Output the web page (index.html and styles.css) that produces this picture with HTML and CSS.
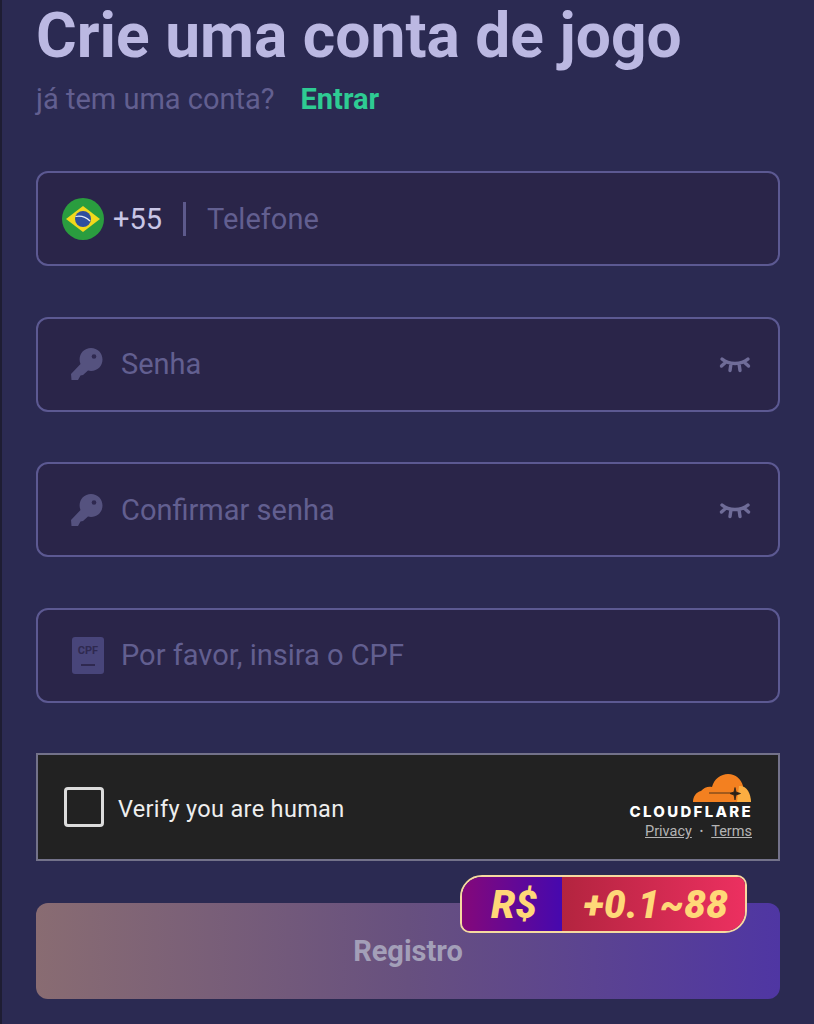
FILE: index.html
```html
<!DOCTYPE html>
<html lang="pt">
<head>
<meta charset="utf-8">
<title>Crie uma conta de jogo</title>
<link rel="stylesheet" href="styles.css">
</head>
<body>
<main class="page">
  <h1 class="title">Crie uma conta de jogo</h1>
  <p class="subtitle"><span>já tem uma conta?</span><a class="login">Entrar</a></p>
  <form class="form">
    <div class="field field-phone">
      <svg class="flag" viewBox="0 0 42 42"><circle cx="21" cy="21" r="21" fill="#2a9d3f"/><path d="M21 8 38 21 21 34 4 21Z" fill="#f2d91c"/><circle cx="21" cy="21" r="8" fill="#2f4f9e"/><path d="M13.500 18.500c5-1 10.500 .5 14.500 4.500" fill="none" stroke="#e8edf5" stroke-width="1.200"/></svg>
      <span class="code">+55</span>
      <span class="divider"></span>
      <span class="placeholder">Telefone</span>
    </div>
    <div class="field">
      <svg class="icon" viewBox="0 0 34 34"><path d="M21 1c6.500 0 11.500 5 11.500 11.500S27.500 24 21 24c-1 0-2-.2-3-.5L13 28l-2.500 .5L8 33H1.500L1 27 10.500 17c-.6-1.500-.9-3-.9-4.500C9.600 6 14.500 1 21 1Z" fill="#55527f"/><circle cx="24" cy="9.500" r="2.300" fill="#2f2950"/></svg>
      <span class="placeholder">Senha</span>
      <svg class="eye" viewBox="0 0 32 18"><path d="M3 4c3.500 3 7.500 4.500 13 4.500S25.500 7 29 4M2.500 11 7 7M29.500 11 25 7M11 15.500l1-7M21 15.500l-1-7" fill="none" stroke="#6f6c98" stroke-width="3.400" stroke-linecap="round"/></svg>
    </div>
    <div class="field">
      <svg class="icon" viewBox="0 0 34 34"><path d="M21 1c6.500 0 11.500 5 11.500 11.500S27.500 24 21 24c-1 0-2-.2-3-.5L13 28l-2.500 .5L8 33H1.500L1 27 10.500 17c-.6-1.500-.9-3-.9-4.500C9.600 6 14.500 1 21 1Z" fill="#55527f"/><circle cx="24" cy="9.500" r="2.300" fill="#2f2950"/></svg>
      <span class="placeholder">Confirmar senha</span>
      <svg class="eye" viewBox="0 0 32 18"><path d="M3 4c3.500 3 7.500 4.500 13 4.500S25.500 7 29 4M2.500 11 7 7M29.500 11 25 7M11 15.500l1-7M21 15.500l-1-7" fill="none" stroke="#6f6c98" stroke-width="3.400" stroke-linecap="round"/></svg>
    </div>
    <div class="field">
      <div class="cpf"><span class="cpf-text">CPF</span><span class="cpf-line"></span></div>
      <span class="placeholder">Por favor, insira o CPF</span>
    </div>
    <div class="captcha">
      <span class="checkbox"></span>
      <span class="verify">Verify you are human</span>
      <div class="brand">
        <svg class="cloud" viewBox="0 0 60 30"><path d="M1 29C1 24 4 19 9 18 12 14 17 13 20 14 22 6 29 1 36 1 44 1 49 6 51 13L47 29Z" fill="#f38020"/><path d="M45 29 47 13C54 12 59 20 59 29Z" fill="#fbad41"/><path d="M17 20H41M43 14.500l1 4.500 4.500 1.500-4.500 1.500-1 5-1-5-4-1.500 4-1.500Z" fill="#2a2118" stroke="#2a2118" stroke-width=".8"/></svg>
        <span class="wordmark">CLOUDFLARE</span>
        <span class="links"><a>Privacy</a><i>•</i><a>Terms</a></span>
      </div>
    </div>
    <div class="submit-wrap">
      <div class="badge"><span class="badge-cur">R$</span><span class="badge-val">+0.1~88</span></div>
      <button type="button" class="submit">Registro</button>
    </div>
  </form>
</main>
</body>
</html>
```
FILE: styles.css
```css
* { box-sizing: border-box; }
html, body { margin: 0; height: 100%; }
body { background: #2b2a52; font-family: Roboto, "Liberation Sans", sans-serif; overflow: hidden; }
.page { height: 1024px; padding: 0 34px 0 34px; border-left: 2px solid #1e1d33; }
.title { margin: 0; padding-top: 3px; font-size: 62.300px; line-height: 66px; font-weight: 700; color: #bbb8e2; white-space: nowrap; }
.subtitle { margin: 10px 0 0; display: flex; gap: 26px; font-size: 29px; line-height: 40px; color: #625f90; height: 40px; }
.login { font-weight: 700; color: #2ecb93; }
.form { margin-top: 52px; display: flex; flex-direction: column; gap: 50.500px; }
.field { height: 95px; border: 2px solid #5c5992; border-radius: 12px; background: #2a2549; display: flex; align-items: center; padding: 0 27px 0 32px; }
.field-phone { padding-left: 24px; }
.flag { width: 42px; height: 42px; flex: none; }
.code { margin-left: 9px; font-size: 29px; color: #c9c6e6; }
.divider { width: 3px; height: 34px; background: #5d5a8c; margin: 0 21px; }
.placeholder { font-size: 29px; color: #625f90; white-space: nowrap; }
.icon { width: 34px; height: 34px; margin-right: 17px; flex: none; }
.eye { width: 32px; height: 18px; margin-left: auto; flex: none; }
.cpf { width: 32px; height: 37px; margin-left: 2px; margin-right: 17px; flex: none; background: #48457a; border-radius: 3px; display: flex; flex-direction: column; align-items: center; padding-top: 7px; }
.cpf-text { font-size: 11px; line-height: 13px; font-weight: 700; color: #2f2950; }
.cpf-line { width: 14px; height: 2px; background: #2f2950; margin-top: 7px; }
.captcha { height: 108px; background: #222222; border: 2px solid #73728a; display: flex; align-items: center; padding: 0 26px 0 26px; }
.checkbox { width: 40px; height: 40px; border: 3px solid #dcdcdc; border-radius: 4px; flex: none; }
.verify { margin-left: 14px; padding-top: 3px; font-size: 23.500px; color: #eeeeee; letter-spacing: .33px; }
.brand { margin-left: auto; display: flex; flex-direction: column; align-items: flex-end; }
.cloud { width: 60px; height: 30px; }
.wordmark { margin-top: -1px; font-family: Inter, sans-serif; font-weight: 800; font-size: 15px; line-height: 19px; letter-spacing: 2.300px; color: #fff; margin-right: -1px; }
.links { margin-top: 2px; display: flex; align-items: center; gap: 8px; font-size: 14.500px; line-height: 18px; color: #b4b4b4; }
.links a { text-decoration: underline; }
.links i { font-style: normal; font-size: 10px; }
.submit-wrap { position: relative; margin-top: -8.500px; }
.submit { display: block; width: 100%; height: 96px; border: 0; border-radius: 12px; background: linear-gradient(90deg, #896c72 0%, #67507f 50%, #4f36a3 100%); color: #a39fb8; font: 700 29px Roboto, sans-serif; }
.badge { position: absolute; left: 424px; top: -28px; width: 287px; height: 58px; border: 2px solid #f6d9a0; border-radius: 22px 10px 22px 10px; overflow: hidden; display: flex; font-style: italic; font-weight: 900; font-size: 38.500px; color: #ffd878; }
.badge-cur { width: 100px; padding-left: 4px; display: flex; align-items: center; justify-content: center; background: linear-gradient(90deg, #84087a, #4608ae); }
.badge-val { flex: 1; padding-left: 5px; display: flex; align-items: center; justify-content: center; background: linear-gradient(90deg, #b3243f, #ec3060); letter-spacing: .5px; }
```
